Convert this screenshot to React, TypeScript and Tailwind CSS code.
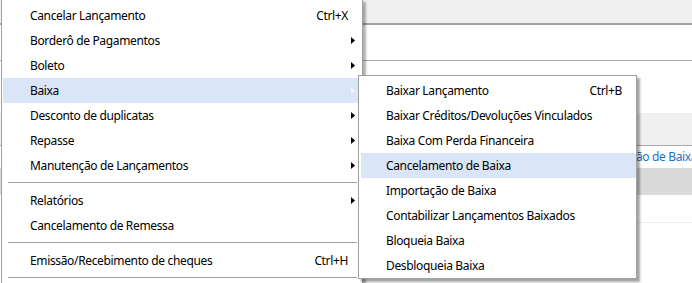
import React from "react";

type Item =
  | { kind: "item"; label: string; shortcut?: string; sub?: boolean; active?: boolean }
  | { kind: "sep" };

const mainItems: Item[] = [
  { kind: "item", label: "Cancelar Lançamento", shortcut: "Ctrl+X" },
  { kind: "item", label: "Borderô de Pagamentos", sub: true },
  { kind: "item", label: "Boleto", sub: true },
  { kind: "item", label: "Baixa", sub: true, active: true },
  { kind: "item", label: "Desconto de duplicatas", sub: true },
  { kind: "item", label: "Repasse", sub: true },
  { kind: "item", label: "Manutenção de Lançamentos", sub: true },
  { kind: "sep" },
  { kind: "item", label: "Relatórios", sub: true },
  { kind: "item", label: "Cancelamento de Remessa" },
  { kind: "sep" },
  { kind: "item", label: "Emissão/Recebimento de cheques", shortcut: "Ctrl+H" },
  { kind: "sep" },
];

const subItems: Item[] = [
  { kind: "item", label: "Baixar Lançamento", shortcut: "Ctrl+B" },
  { kind: "item", label: "Baixar Créditos/Devoluções Vinculados" },
  { kind: "item", label: "Baixa Com Perda Financeira" },
  { kind: "item", label: "Cancelamento de Baixa", active: true },
  { kind: "item", label: "Importação de Baixa" },
  { kind: "item", label: "Contabilizar Lançamentos Baixados" },
  { kind: "item", label: "Bloqueia Baixa" },
  { kind: "item", label: "Desbloqueia Baixa" },
];

function Arrow({ light }: { light?: boolean }) {
  return (
    <svg width="4" height="7" viewBox="0 0 4 7" className="block">
      <polygon points="0,0 4,3.5 0,7" fill={light ? "#f4f4f4" : "#000000"} />
    </svg>
  );
}

function Row({ item, padLeft, padRight }: { item: Extract<Item, { kind: "item" }>; padLeft: string; padRight: string }) {
  return (
    <div
      className={`flex h-[25px] items-center ${padLeft} ${item.active ? "bg-[#dae6f7]" : ""}`}
    >
      <span className="flex-1 whitespace-nowrap">{item.label}</span>
      {item.shortcut && <span className="whitespace-nowrap">{item.shortcut}</span>}
      <span className={`flex ${padRight} items-center pl-[3px]`}>
        {item.sub && <Arrow light={item.active} />}
      </span>
    </div>
  );
}

export default function App() {
  return (
    <div className="relative h-[283px] w-[692px] overflow-hidden bg-white text-[12px] text-black font-['Noto_Sans',sans-serif] tracking-[-0.35px]">
      {/* background application */}
      <div className="h-[23px] bg-[#f0f0f0]" />
      <div className="h-[2px] bg-[#a3a3a3]" />
      <div className="h-[35px] bg-white" />
      <div className="h-px bg-[#a8a8a8]" />
      <div className="h-[52px] bg-white" />
      <div className="h-[32px] bg-[#f0f0f0]" />
      <div className="h-px bg-[#a8a8a8]" />
      <div className="flex h-[22px] items-center overflow-hidden bg-white pl-[587px]">
        <span className="whitespace-nowrap text-[#1e6fc0]">Importação de Baixa</span>
      </div>
      <div className="h-[27px] bg-[#dadada]" />
      <div className="h-[27px] bg-white" />
      <div className="h-px bg-[#ececec]" />

      {/* main menu */}
      <div className="absolute left-[1px] top-0 w-[362px] border-x border-[#a0a0a0] bg-white px-[1px] pt-[3px] shadow-[3px_2px_2px_rgba(0,0,0,0.3)]">
        {mainItems.map((it, i) =>
          it.kind === "sep" ? (
            <div key={i} className="h-[10px] pt-[4px]">
              <div className="ml-[5px] mr-[4px] h-px bg-[#a0a0a0]" />
            </div>
          ) : (
            <Row key={i} item={it} padLeft="pl-[27px]" padRight="w-[13px]" />
          )
        )}
      </div>

      {/* submenu */}
      <div className="absolute left-[358px] top-[75px] h-[204px] w-[279px] border border-[#a0a0a0] bg-white pl-[2px] pt-[2px] shadow-[3px_3px_2px_rgba(0,0,0,0.35)]">
        {subItems.map((it, i) =>
          it.kind === "sep" ? null : (
            <Row key={i} item={it} padLeft="pl-[25px]" padRight="w-[14px]" />
          )
        )}
      </div>
    </div>
  );
}
